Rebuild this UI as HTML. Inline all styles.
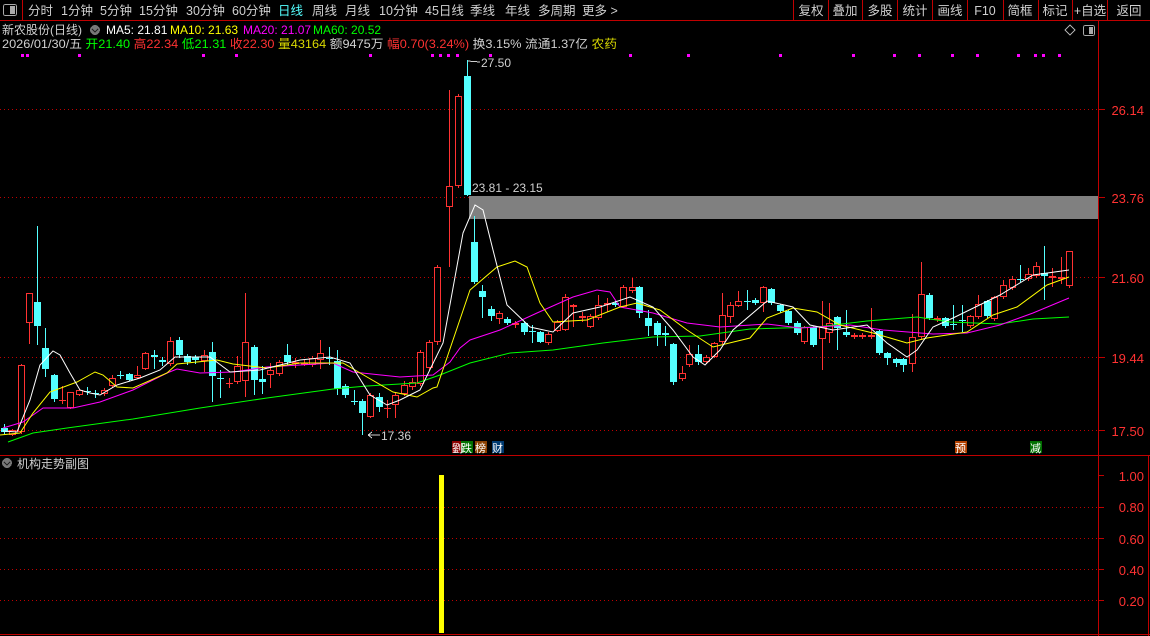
<!DOCTYPE html>
<html><head><meta charset="utf-8"><style>
html,body{margin:0;padding:0;background:#000;width:1150px;height:636px;overflow:hidden}
svg{display:block}
text{font-family:"Liberation Sans","Noto Sans CJK SC",sans-serif}
</style></head><body>
<svg id="s" width="1150" height="636" viewBox="0 0 1150 636" xmlns="http://www.w3.org/2000/svg" shape-rendering="crispEdges">
<rect width="1150" height="636" fill="#000"/>
<line x1="0" y1="20.5" x2="1150" y2="20.5" stroke="#c00000"/>
<line x1="22.5" y1="0" x2="22.5" y2="20" stroke="#c00000"/>
<rect x="3.5" y="4.5" width="13" height="11" rx="2" fill="none" stroke="#aaa"/>
<rect x="10" y="6" width="5" height="8" fill="#aaa"/>
<g font-size="12.5" fill="#d0d0d0">
<text x="28" y="15">分时</text><text x="61" y="15">1分钟</text><text x="100" y="15">5分钟</text><text x="139" y="15">15分钟</text><text x="186" y="15">30分钟</text><text x="232" y="15">60分钟</text><text x="278" y="15" fill="#54ffff">日线</text><text x="312" y="15">周线</text><text x="345" y="15">月线</text><text x="379" y="15">10分钟</text><text x="425" y="15">45日线</text><text x="470" y="15">季线</text><text x="505" y="15">年线</text><text x="538" y="15">多周期</text><text x="582" y="15">更多 &gt;</text>
</g>
<g stroke="#c00000"><line x1="793.5" y1="0" x2="793.5" y2="20"/><line x1="828.5" y1="0" x2="828.5" y2="20"/><line x1="862.5" y1="0" x2="862.5" y2="20"/><line x1="897.5" y1="0" x2="897.5" y2="20"/><line x1="932.5" y1="0" x2="932.5" y2="20"/><line x1="967.5" y1="0" x2="967.5" y2="20"/><line x1="1003.5" y1="0" x2="1003.5" y2="20"/><line x1="1038.5" y1="0" x2="1038.5" y2="20"/><line x1="1072.5" y1="0" x2="1072.5" y2="20"/><line x1="1107.5" y1="0" x2="1107.5" y2="20"/></g>
<g font-size="12.5" fill="#d0d0d0" text-anchor="middle">
<text x="811" y="15">复权</text><text x="845" y="15">叠加</text><text x="880" y="15">多股</text><text x="915" y="15">统计</text><text x="950" y="15">画线</text><text x="985" y="15">F10</text><text x="1020" y="15">简框</text><text x="1055" y="15">标记</text><text x="1090" y="15">+自选</text><text x="1129" y="15">返回</text>
</g>
<g font-size="12">
<text x="2" y="34" fill="#d0d0d0">新农股份(日线)</text>
<circle cx="95" cy="30" r="5" fill="#777"/><path d="M92 29 L95 32 L98 29" stroke="#222" fill="none" stroke-width="1.3"/>
<text x="106" y="34" fill="#fff">MA5: 21.81</text>
<text x="170" y="34" fill="#ffff00">MA10: 21.63</text>
<text x="243" y="34" fill="#ff00ff">MA20: 21.07</text>
<text x="313" y="34" fill="#00ff00">MA60: 20.52</text>
<text x="2" y="48" textLength="615" lengthAdjust="spacingAndGlyphs"><tspan fill="#d0d0d0">2026/01/30/五 </tspan><tspan fill="#00ff00">开21.40 </tspan><tspan fill="#ff3232">高22.34 </tspan><tspan fill="#00ff00">低21.31 </tspan><tspan fill="#ff3232">收22.30 </tspan><tspan fill="#d8d800">量43164 </tspan><tspan fill="#d0d0d0">额9475万 </tspan><tspan fill="#ff3232">幅0.70(3.24%) </tspan><tspan fill="#d0d0d0">换3.15% 流通1.37亿 </tspan><tspan fill="#d8d800">农药</tspan></text>
</g>
<path d="M1070 25 L1075 30 L1070 35 L1065 30 Z" fill="none" stroke="#aaa"/>
<rect x="1083.5" y="25.5" width="11" height="10" rx="2" fill="none" stroke="#aaa"/><rect x="1089" y="27" width="4" height="7" fill="#aaa"/>
<line x1="1098.5" y1="20" x2="1098.5" y2="636" stroke="#c00000"/>
<line x1="0" y1="455.5" x2="1150" y2="455.5" stroke="#c00000"/>
<line x1="0" y1="634.5" x2="1150" y2="634.5" stroke="#c00000"/>
<line x1="1148.5" y1="455" x2="1148.5" y2="636" stroke="#c00000"/>
<g stroke="#c00000" stroke-dasharray="1,3">
<line x1="0" y1="109.5" x2="1098" y2="109.5"/><line x1="0" y1="197.5" x2="1098" y2="197.5"/><line x1="0" y1="277.5" x2="1098" y2="277.5"/><line x1="0" y1="357.5" x2="1098" y2="357.5"/><line x1="0" y1="430.5" x2="1098" y2="430.5"/>
<line x1="0" y1="507.5" x2="1098" y2="507.5"/><line x1="0" y1="538.5" x2="1098" y2="538.5"/><line x1="0" y1="569.5" x2="1098" y2="569.5"/><line x1="0" y1="600.5" x2="1098" y2="600.5"/>
</g>
<g stroke="#c00000"><line x1="1099" y1="109.5" x2="1105" y2="109.5"/><line x1="1099" y1="197.5" x2="1105" y2="197.5"/><line x1="1099" y1="277.5" x2="1105" y2="277.5"/><line x1="1099" y1="357.5" x2="1105" y2="357.5"/><line x1="1099" y1="430.5" x2="1105" y2="430.5"/>
<line x1="1099" y1="475.5" x2="1104" y2="475.5"/><line x1="1099" y1="507.5" x2="1104" y2="507.5"/><line x1="1099" y1="538.5" x2="1104" y2="538.5"/><line x1="1099" y1="569.5" x2="1104" y2="569.5"/><line x1="1099" y1="600.5" x2="1104" y2="600.5"/></g>
<g font-size="13" fill="#ff3232" text-anchor="end">
<text x="1144" y="115">26.14</text><text x="1144" y="203">23.76</text><text x="1144" y="283">21.60</text><text x="1144" y="363">19.44</text><text x="1144" y="436">17.50</text>
<text x="1144" y="481">1.00</text><text x="1144" y="512">0.80</text><text x="1144" y="544">0.60</text><text x="1144" y="575">0.40</text><text x="1144" y="606">0.20</text>
</g>
<rect x="469" y="196" width="629" height="23" fill="#808080"/>
<text x="472" y="192" font-size="12" fill="#d0d0d0">23.81 - 23.15</text>
<text x="481" y="67" font-size="12" fill="#d0d0d0">27.50</text>
<path d="M467 61 L480 62" stroke="#d0d0d0" fill="none"/>
<text x="381" y="440" font-size="12" fill="#d0d0d0">17.36</text>
<path d="M368 435 L380 435 M368 435 L372 432 M368 435 L372 438" stroke="#d0d0d0" fill="none"/>
<g id="cand"></g>
<g id="ma" fill="none" stroke-width="1" shape-rendering="auto"></g>
<g id="dots" fill="#ff00ff"></g>
<rect x="452" y="441" width="9" height="12" fill="#8b0000"/><rect x="461" y="441" width="12" height="12" fill="#007000"/><rect x="475" y="441" width="12" height="12" fill="#8b4000"/><rect x="492" y="441" width="12" height="12" fill="#003a70"/>
<g font-size="11" fill="#fff"><text x="452" y="452">劉</text><text x="461" y="452">跌</text><text x="475" y="452">榜</text><text x="492" y="452">财</text></g>
<rect x="955" y="441" width="12" height="12" fill="#b04000"/><text x="955" y="452" font-size="11" fill="#fff">预</text>
<rect x="1030" y="441" width="12" height="12" fill="#007000"/><text x="1030" y="452" font-size="11" fill="#fff">减</text>
<circle cx="7" cy="463" r="5" fill="#777"/><path d="M4 462 L7 465 L10 462" stroke="#222" fill="none" stroke-width="1.3"/>
<text x="17" y="468" font-size="12" fill="#d0d0d0">机构走势副图</text>
<rect x="439" y="475" width="5" height="158" fill="#ffff00"/>
</svg>
<script>
var C=[[4,428,432,424,434,'c'],[12,430,435,429,436,'r'],[21,365,432,364,434,'r'],[29,293,323,293,344,'r'],[37,302,326,226,345,'c'],[45,348,369,328,377,'c'],[54,375,399,374,402,'c'],[62,400,401,386,404,'r'],[70,392,408,392,409,'r'],[79,390,395,389,396,'r'],[87,391,392,387,395,'c'],[95,393,394,390,398,'c'],[104,390,394,388,396,'r'],[112,378,386,375,388,'r'],[120,375,376,371,379,'c'],[129,374,380,373,381,'c'],[137,375,378,366,379,'r'],[145,353,369,352,370,'r'],[154,355,357,350,369,'c'],[162,360,362,357,366,'c'],[170,341,364,337,366,'r'],[179,340,355,337,358,'c'],[187,356,362,354,365,'c'],[195,357,360,355,364,'c'],[204,355,361,350,372,'r'],[212,352,376,342,402,'c'],[220,378,379,370,398,'c'],[229,383,384,378,388,'r'],[237,366,382,356,384,'r'],[245,342,381,293,397,'r'],[254,347,380,345,395,'c'],[262,379,382,366,394,'c'],[270,370,375,363,388,'r'],[279,362,374,360,376,'r'],[287,355,362,344,365,'c'],[295,362,364,358,368,'r'],[304,363,365,360,366,'r'],[312,358,365,356,367,'r'],[320,353,360,340,369,'r'],[329,358,359,347,365,'c'],[337,361,389,350,395,'c'],[345,386,395,384,398,'c'],[354,401,402,390,405,'c'],[362,401,413,399,435,'c'],[370,395,417,393,418,'r'],[379,397,407,393,412,'c'],[387,408,409,400,418,'r'],[395,395,405,393,418,'r'],[404,385,394,381,396,'r'],[412,382,387,378,390,'r'],[420,352,384,350,386,'r'],[429,342,368,340,370,'r'],[437,267,342,265,345,'r'],[449,186,207,90,267,'r'],[458,96,186,94,188,'r'],[467,76,195,60,196,'c'],[474,242,282,216,284,'c'],[482,291,297,285,318,'c'],[491,309,316,306,321,'c'],[499,313,319,311,324,'r'],[507,319,323,317,325,'c'],[515,323,325,321,328,'r'],[524,323,332,321,335,'c'],[532,331,332,325,343,'c'],[540,332,342,331,343,'c'],[548,334,343,332,345,'r'],[557,322,331,320,332,'r'],[565,297,330,294,331,'r'],[573,305,307,304,327,'r'],[582,316,318,312,322,'r'],[590,316,327,314,328,'r'],[598,305,318,295,320,'r'],[607,303,305,298,312,'r'],[615,303,305,301,307,'c'],[623,287,307,285,308,'r'],[632,287,291,278,293,'r'],[639,287,313,286,318,'c'],[648,318,326,310,336,'c'],[657,323,335,321,346,'c'],[665,333,335,326,346,'c'],[673,344,382,343,385,'c'],[682,373,379,366,381,'r'],[689,354,365,345,367,'r'],[698,354,362,345,365,'c'],[706,357,362,355,364,'r'],[714,343,357,342,358,'r'],[722,315,342,293,344,'r'],[730,305,317,302,323,'r'],[738,301,306,291,307,'r'],[747,301,302,290,310,'c'],[755,300,303,298,305,'c'],[763,287,303,286,312,'r'],[771,289,303,288,305,'c'],[780,305,311,304,313,'c'],[788,311,323,310,325,'c'],[797,323,333,321,335,'c'],[804,327,342,326,344,'r'],[813,327,345,326,347,'c'],[822,327,339,301,370,'r'],[829,323,333,303,343,'r'],[837,317,328,316,350,'c'],[846,332,335,310,337,'c'],[854,335,337,333,339,'r'],[862,335,337,333,339,'r'],[871,335,337,308,339,'r'],[879,331,353,330,355,'c'],[887,353,358,352,365,'c'],[896,359,363,358,367,'c'],[903,359,365,358,372,'c'],[912,337,364,314,372,'r'],[921,294,337,262,339,'r'],[929,295,318,293,320,'c'],[937,318,320,316,322,'r'],[945,318,326,317,328,'c'],[953,324,325,305,330,'c'],[962,320,321,305,332,'c'],[970,316,326,315,328,'r'],[978,304,317,295,319,'r'],[987,301,316,300,318,'c'],[994,297,319,296,321,'r'],[1003,285,297,280,299,'r'],[1012,279,288,276,290,'r'],[1020,279,280,265,282,'c'],[1028,274,279,268,281,'r'],[1036,266,276,262,278,'r'],[1044,273,276,246,300,'c'],[1052,276,278,268,287,'r'],[1061,277,279,257,284,'r'],[1069,251,286,251,288,'r']];
var NS='http://www.w3.org/2000/svg',g=document.getElementById('cand');
function el(t,a,p){var e=document.createElementNS(NS,t);for(var k in a)e.setAttribute(k,a[k]);p.appendChild(e);return e;}
C.forEach(function(c){var x=c[0],col=c[5]=='r'?'#ff3232':'#54ffff';
 el('line',{x1:x+.5,y1:c[3],x2:x+.5,y2:c[2]<c[1]?c[2]:c[1],stroke:col},g);
 el('line',{x1:x+.5,y1:c[2],x2:x+.5,y2:c[4],stroke:col},g);
 var h=c[2]-c[1];
 if(c[5]=='c'){el('rect',{x:x-3,y:c[1],width:7,height:Math.max(h,1),fill:col},g);}
 else if(h<=2){el('rect',{x:x-3,y:c[1],width:7,height:Math.max(h,1),fill:col},g);}
 else{el('rect',{x:x-2.5,y:c[1]+.5,width:6,height:h-1,fill:'#000',stroke:col},g);}
});
var M={'#00ff00':[[8,442],[33,433],[67,428],[133,419],[200,408],[267,398],[333,389],[367,386],[417,383],[440,375],[460,367],[470,363],[510,353],[553,350],[603,343],[653,337],[700,336],[750,329],[817,327],[867,321],[917,317],[950,322],[1000,324],[1033,319],[1069,317]],
'#ff00ff':[[3,428],[23,422],[43,408],[73,408],[100,402],[133,390],[167,373],[177,369],[200,373],[233,372],[267,367],[333,363],[353,372],[400,377],[433,375],[450,362],[460,348],[470,340],[500,330],[537,313],[573,297],[597,290],[610,292],[620,307],[653,313],[687,323],[720,327],[767,324],[800,328],[850,325],[883,330],[933,334],[967,333],[1000,325],[1033,313],[1069,298]],
'#ffff00':[[0,435],[20,433],[33,413],[50,392],[77,382],[95,372],[103,375],[117,387],[133,388],[167,373],[177,364],[217,360],[233,364],[267,368],[300,363],[343,363],[367,377],[393,392],[417,397],[433,388],[437,387],[453,340],[470,290],[497,267],[515,261],[527,267],[540,303],[553,322],[587,320],[620,307],[637,303],[660,310],[687,330],[713,347],[750,338],[767,318],[793,308],[817,312],[840,325],[873,333],[907,343],[927,338],[967,332],[993,315],[1017,307],[1047,285],[1069,277]],
'#ffffff':[[3,431],[17,432],[30,400],[40,365],[53,351],[60,355],[70,373],[80,390],[90,393],[100,395],[117,385],[140,378],[160,370],[175,357],[190,357],[210,357],[230,372],[260,370],[300,360],[330,357],[350,363],[370,395],[387,405],[400,400],[420,390],[443,343],[463,233],[475,205],[483,210],[493,250],[507,305],[530,327],[553,332],[573,313],[600,307],[630,297],[653,307],[673,330],[693,357],[705,365],[720,350],[733,330],[767,301],[793,307],[810,325],[833,330],[867,325],[887,343],[907,357],[917,350],[933,327],[953,318],[1000,295],[1033,275],[1069,270]]};
var mg=document.getElementById('ma');
for(var k in M){el('polyline',{points:M[k].map(function(p){return p.join(',')}).join(' '),stroke:k},mg);}
var d=document.getElementById('dots');
[22,27,79,203,236,370,432,440,448,457,490,630,688,780,853,894,919,952,977,1018,1035,1043,1059].forEach(function(x){el('rect',{x:x-1,y:54,width:3,height:3},d);});
</script>
</body></html>
